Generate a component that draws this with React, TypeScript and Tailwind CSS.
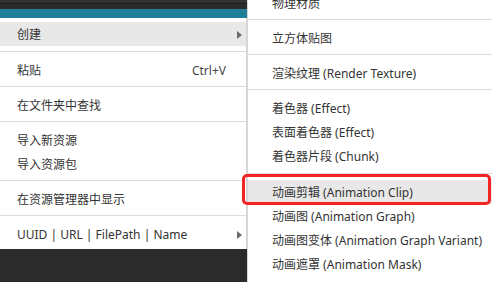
import React from 'react';

type Item = { label?: string; shortcut?: string; sub?: boolean; active?: boolean; sep?: boolean; big?: boolean };

const mainItems: Item[] = [
  { label: '创建', sub: true, active: true },
  { sep: true, big: true },
  { label: '粘贴', shortcut: 'Ctrl+V' },
  { sep: true },
  { label: '在文件夹中查找' },
  { sep: true },
  { label: '导入新资源' },
  { label: '导入资源包' },
  { sep: true },
  { label: '在资源管理器中显示' },
  { sep: true },
  { label: 'UUID | URL | FilePath | Name', sub: true },
];

const subItems: Item[] = [
  { label: '物理材质' },
  { sep: true },
  { label: '立方体贴图' },
  { sep: true },
  { label: '渲染纹理 (Render Texture)' },
  { sep: true },
  { label: '着色器 (Effect)' },
  { label: '表面着色器 (Effect)' },
  { label: '着色器片段 (Chunk)' },
  { sep: true, big: true },
  { label: '动画剪辑 (Animation Clip)', active: true },
  { label: '动画图 (Animation Graph)' },
  { label: '动画图变体 (Animation Graph Variant)' },
  { label: '动画遮罩 (Animation Mask)' },
  { label: '动画图层级 (Animation Graph Layer)' },
];

const Arrow = () => (
  <svg width="5" height="8" viewBox="0 0 5 8" className="shrink-0">
    <path d="M0 0 L5 4 L0 8 Z" fill="#6b6b6b" />
  </svg>
);

const Separator = ({ big }: { big?: boolean }) => (
  <div className={big ? 'pt-[5px] pb-[6px]' : 'pt-[4px] pb-[6px]'}>
    <div className="h-px bg-[#dcdcdc]" />
  </div>
);

export default function App() {
  return (
    <div
      className="relative w-[492px] h-[282px] overflow-hidden bg-[#2b2b2b] flex text-[12px] text-[#333333]"
      style={{ fontFamily: '"Noto Sans", "Noto Sans CJK SC", sans-serif' }}
    >
      {/* main context menu */}
      <div className="w-[247px] shrink-0 flex flex-col">
        <div className="h-[3px] bg-[#333333]" />
        <div className="h-px bg-[#1c1c1c]" />
        <div className="h-[5px] bg-[#2b2b2b]" />
        <div className="h-[9px] bg-[#1f7f9a]" />
        <div className="bg-white pt-[4px] pb-[3px] border-r border-[#d6d6d6]">
          {mainItems.map((it, i) =>
            it.sep ? (
              <Separator key={i} big={it.big} />
            ) : (
              <div
                key={i}
                className={`h-[24px] flex items-center pl-[17px] pr-[4px] pt-[2px] leading-none ${it.active ? 'bg-[#e8e8e8]' : ''}`}
              >
                <span className="flex-1 whitespace-nowrap">{it.label}</span>
                {it.shortcut && <span className="mr-[16px] text-[#444444]">{it.shortcut}</span>}
                {it.sub && <Arrow />}
              </div>
            )
          )}
        </div>
      </div>

      {/* submenu */}
      <div className="flex-1 bg-white border-l border-[#d6d6d6] -mt-[9px] self-start">
        {subItems.map((it, i) =>
          it.sep ? (
            <Separator key={i} big={it.big} />
          ) : (
            <div
              key={i}
              className={`h-[24px] flex items-center pl-[24px] pt-[2px] leading-none whitespace-nowrap ${it.active ? 'bg-[#e8e8e8]' : ''}`}
            >
              {it.label}
            </div>
          )
        )}
      </div>

      {/* red annotation box */}
      <div className="absolute left-[242px] top-[174px] w-[249px] h-[31px] border-[3px] border-[#f52424] rounded-[5px]" />
    </div>
  );
}
